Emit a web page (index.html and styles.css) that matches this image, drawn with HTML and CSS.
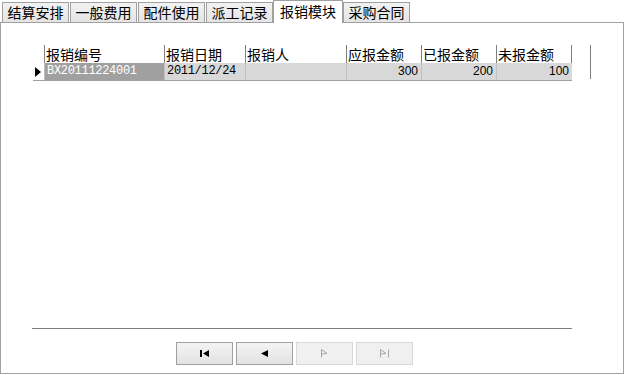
FILE: index.html
```html
<!DOCTYPE html>
<html lang="zh-CN">
<head>
    <meta charset="UTF-8">
    <title>报销模块</title>
    <link rel="stylesheet" href="styles.css">
</head>
<body>
    <!-- Tabs -->
    <div class="tabs">
        <div class="tab">结算安排</div>
        <div class="tab">一般费用</div>
        <div class="tab">配件使用</div>
        <div class="tab">派工记录</div>
        <div class="tab active">报销模块</div>
        <div class="tab">采购合同</div>
    </div>

    <div class="panel">
        <!-- Grid -->
        <div class="grid-wrap">
            <div class="grid">
                <div class="hd ind"></div>
                <div class="hd">报销编号</div>
                <div class="hd">报销日期</div>
                <div class="hd">报销人</div>
                <div class="hd">应报金额</div>
                <div class="hd">已报金额</div>
                <div class="hd last">未报金额</div>

                <div class="cell ind"><span class="arrow"></span></div>
                <div class="cell mono selected">BX20111224001</div>
                <div class="cell mono">2011/12/24</div>
                <div class="cell"></div>
                <div class="cell num">300</div>
                <div class="cell num">200</div>
                <div class="cell num">100</div>
            </div>
            <div class="vline"></div>
        </div>

        <div class="spacer"></div>
        <div class="hline"></div>

        <!-- Navigator -->
        <div class="nav">
            <button class="btn"><svg width="9" height="7" viewBox="0 0 9 7"><rect x="0" y="0" width="2" height="7" fill="#000"/><polygon points="9,0 9,7 3,3.5" fill="#000"/></svg></button>
            <button class="btn"><svg width="7" height="7" viewBox="0 0 7 7"><polygon points="7,0 7,7 0,3.5" fill="#000"/></svg></button>
            <button class="btn off"><svg width="7" height="9" viewBox="0 0 7 9"><path d="M0.5 0.5 V8.5 M0.5 0.5 L6 4.5 L0.5 5" stroke="#a8a8a8" fill="none"/></svg></button>
            <button class="btn off"><svg width="9" height="9" viewBox="0 0 9 9"><path d="M0.5 0.5 V8.5 M0.5 0.5 L6 4.5 L0.5 5 M8.5 0.5 V8.5" stroke="#a8a8a8" fill="none"/></svg></button>
        </div>
    </div>
</body>
</html>
```

FILE: styles.css
```css
body {
    margin: 0;
    width: 625px;
    height: 375px;
    background: #fff;
    font-family: "Noto Sans CJK SC", sans-serif;
    color: #000;
}
.tabs {
    display: flex;
    align-items: flex-end;
    height: 22px;
    padding-left: 2px;
    position: relative;
    z-index: 1;
}
.tab {
    width: 67px;
    height: 20px;
    line-height: 19px;
    box-sizing: border-box;
    text-align: center;
    margin-right: 1px;
    font-size: 14px;
    border: 1px solid #a0a0a0;
    border-bottom: none;
    background: linear-gradient(#f2f2f2, #e4e4e4);
    color: #000;
}
.tab.active {
    width: 70px;
    height: 23px;
    line-height: 20px;
    margin-bottom: -1px;
    margin-left: -1px;
    margin-right: 0;
    background: #fff;
}
.panel {
    box-sizing: border-box;
    width: 624px;
    height: 352px;
    border: 1px solid #a0a0a0;
    display: flex;
    flex-direction: column;
}
.grid-wrap {
    display: flex;
    margin: 22px 0 0 32px;
}
.grid {
    display: grid;
    grid-template-columns: 11px 120px 81px 101px 75px 75px 76px;
    grid-template-rows: 18px 17px;
    border-bottom: 1px solid #a0a0a0;
}
.hd {
    font-size: 14px;
    line-height: 18px;
    padding-left: 1px;
    border-left: 1px solid #808080;
    background: #fff;
    white-space: nowrap;
    overflow: hidden;
}
.hd.ind {
    border-left: none;
    padding: 0;
}
.hd.last {
    border-right: 1px solid #808080;
}
.cell {
    background: #d8d8d8;
    font-size: 12px;
    line-height: 17px;
    padding: 0 3px 0 2px;
    border-left: 1px solid #c0c0c0;
    white-space: nowrap;
    overflow: hidden;
}
.cell.ind {
    background: #fff;
    border-left: none;
    padding: 0;
    display: flex;
    align-items: center;
    padding-left: 2px;
}
.arrow {
    width: 0;
    height: 0;
    border-top: 5px solid transparent;
    border-bottom: 5px solid transparent;
    border-left: 6px solid #000;
}
.mono {
    font-family: "Liberation Mono", "Noto Sans CJK SC", monospace;
    font-size: 12px;
    letter-spacing: -0.3px;
}
.selected {
    background: #a0a0a0;
    color: #fff;
}
.num {
    text-align: right;
    font-family: "Liberation Sans", sans-serif;
}
.vline {
    width: 1px;
    height: 34px;
    background: #808080;
    margin-left: 18px;
}
.spacer {
    flex: 1;
}
.hline {
    width: 540px;
    height: 1px;
    background: #808080;
    margin-left: 31px;
}
.nav {
    display: flex;
    gap: 3px;
    margin: 13px 0 8px 175px;
}
.btn {
    width: 57px;
    height: 23px;
    box-sizing: border-box;
    border: 1px solid #a0a0a0;
    background: linear-gradient(#f4f4f4, #e2e2e2);
    display: flex;
    align-items: center;
    justify-content: center;
    padding: 0;
}
.btn.off {
    border-color: #d8d8d8;
    background: #f0f0f0;
}
```
